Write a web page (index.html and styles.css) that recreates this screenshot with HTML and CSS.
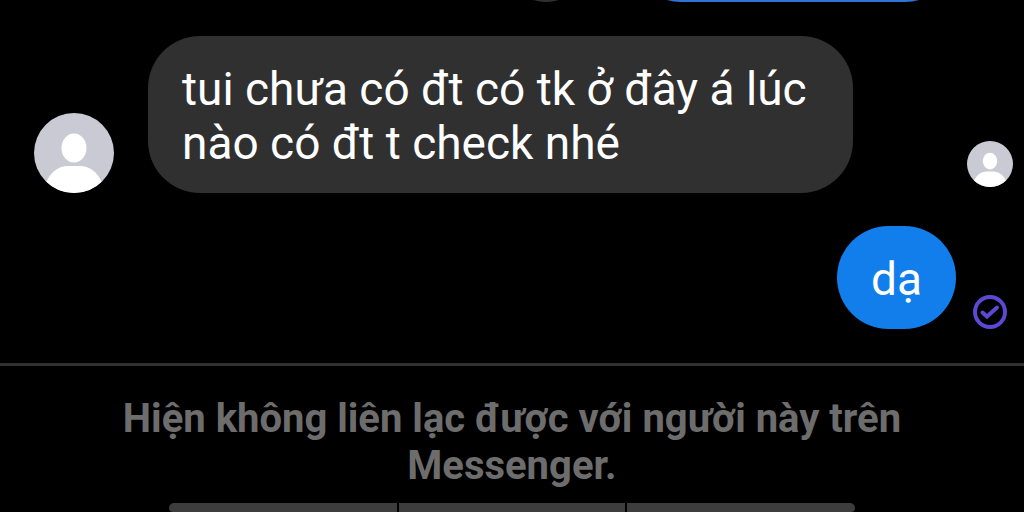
FILE: index.html
```html
<!DOCTYPE html>
<html lang="vi">
<head>
<meta charset="utf-8">
<meta name="viewport" content="width=device-width, initial-scale=1">
<title>Messenger</title>
<link rel="stylesheet" href="styles.css">
</head>
<body>
<svg class="defs" aria-hidden="true">
  <defs>
    <clipPath id="round"><circle cx="40" cy="40" r="40"/></clipPath>
    <symbol id="person" viewBox="0 0 80 80">
      <g clip-path="url(#round)">
        <rect width="80" height="80" fill="#c9cad3"/>
        <ellipse cx="40" cy="35" rx="12.5" ry="14.5" fill="#fff"/>
        <path d="M12 70C16 59 25 53 34 53H46C55 53 64 59 68 70V80H12Z" fill="#fff"/>
      </g>
    </symbol>
  </defs>
</svg>
<main class="chat">
  <div class="earlier">
    <span class="earlier-chip"></span>
    <span class="earlier-bubble"></span>
  </div>
  <div class="row received">
    <svg class="avatar" role="img" aria-label="Avatar"><use href="#person"/></svg>
    <p class="bubble bubble-in">tui chưa có đt có tk ở đây á lúc nào có đt t check nhé</p>
    <svg class="seen" role="img" aria-label="Seen"><use href="#person"/></svg>
  </div>
  <div class="row sent">
    <p class="bubble bubble-out">dạ</p>
    <svg class="status" viewBox="0 0 34 34" role="img" aria-label="Sent">
      <circle cx="17" cy="17" r="15" fill="none" stroke="#5b48d3" stroke-width="4"/>
      <path d="M9.500 17.500L14 21.500L24 12.500" fill="none" stroke="#5b48d3" stroke-width="4" stroke-linecap="round"/>
    </svg>
  </div>
</main>
<footer class="notice">
  <p class="notice-text">Hiện không liên lạc được với người này trên Messenger.</p>
  <div class="tabs"><span class="tab"></span><span class="tab tab-middle"></span><span class="tab"></span></div>
</footer>
</body>
</html>
```
FILE: styles.css
```css
* {
  box-sizing: border-box;
}

body {
  margin: 0;
  min-height: 100vh;
  display: flex;
  flex-direction: column;
  background: #000;
  font-family: Roboto, "Noto Sans", sans-serif;
  overflow: hidden;
}

p {
  margin: 0;
}

.defs {
  position: absolute;
  width: 0;
  height: 0;
}

.chat {
  flex: 1;
  display: flex;
  flex-direction: column;
  gap: 33px;
  padding-bottom: 34px;
}

/* Tail of the previous messages, scrolled out of view */
.earlier {
  height: 2px;
  margin-bottom: 1px;
  display: flex;
  justify-content: flex-end;
  align-items: flex-end;
  gap: 42px;
  padding-right: 68px;
  overflow: hidden;
}

.earlier-chip {
  width: 84px;
  height: 84px;
  border-radius: 50%;
  background: #303030;
}

.earlier-bubble {
  width: 326px;
  height: 102px;
  border-radius: 51px;
  background: #2f74d6;
}

.row {
  display: flex;
  align-items: flex-end;
}

.received {
  gap: 34px;
  padding: 0 11px 0 34px;
}

.sent {
  justify-content: flex-end;
  gap: 17px;
  padding-right: 17px;
}

.avatar {
  flex: none;
  width: 80px;
  height: 80px;
}

.seen {
  flex: none;
  width: 46px;
  height: 46px;
  margin-left: auto;
  margin-bottom: 6px;
}

.status {
  flex: none;
  width: 34px;
  height: 34px;
}

.bubble {
  padding: 26px 34px 23px;
  border-radius: 52px;
  font-size: 46px;
  line-height: 54px;
  color: #fff;
}

.bubble-in {
  max-width: 72%;
  background: #303030;
}

.bubble-out {
  background: #117eec;
}

.notice {
  border-top: 3px solid #303030;
  padding-top: 29px;
  display: flex;
  flex-direction: column;
  align-items: center;
  gap: 14px;
}

.notice-text {
  padding: 0 100px;
  font-size: 40px;
  line-height: 47px;
  font-weight: 700;
  text-align: center;
  color: #6d6d6d;
}

.tabs {
  width: 67%;
  height: 9px;
  display: flex;
  gap: 2px;
  border-radius: 5px 5px 4px 4px;
  overflow: hidden;
}

.tab {
  flex: 1;
  background: #3d3d3d;
}

.tab-middle {
  flex: 0 0 33%;
}
```
